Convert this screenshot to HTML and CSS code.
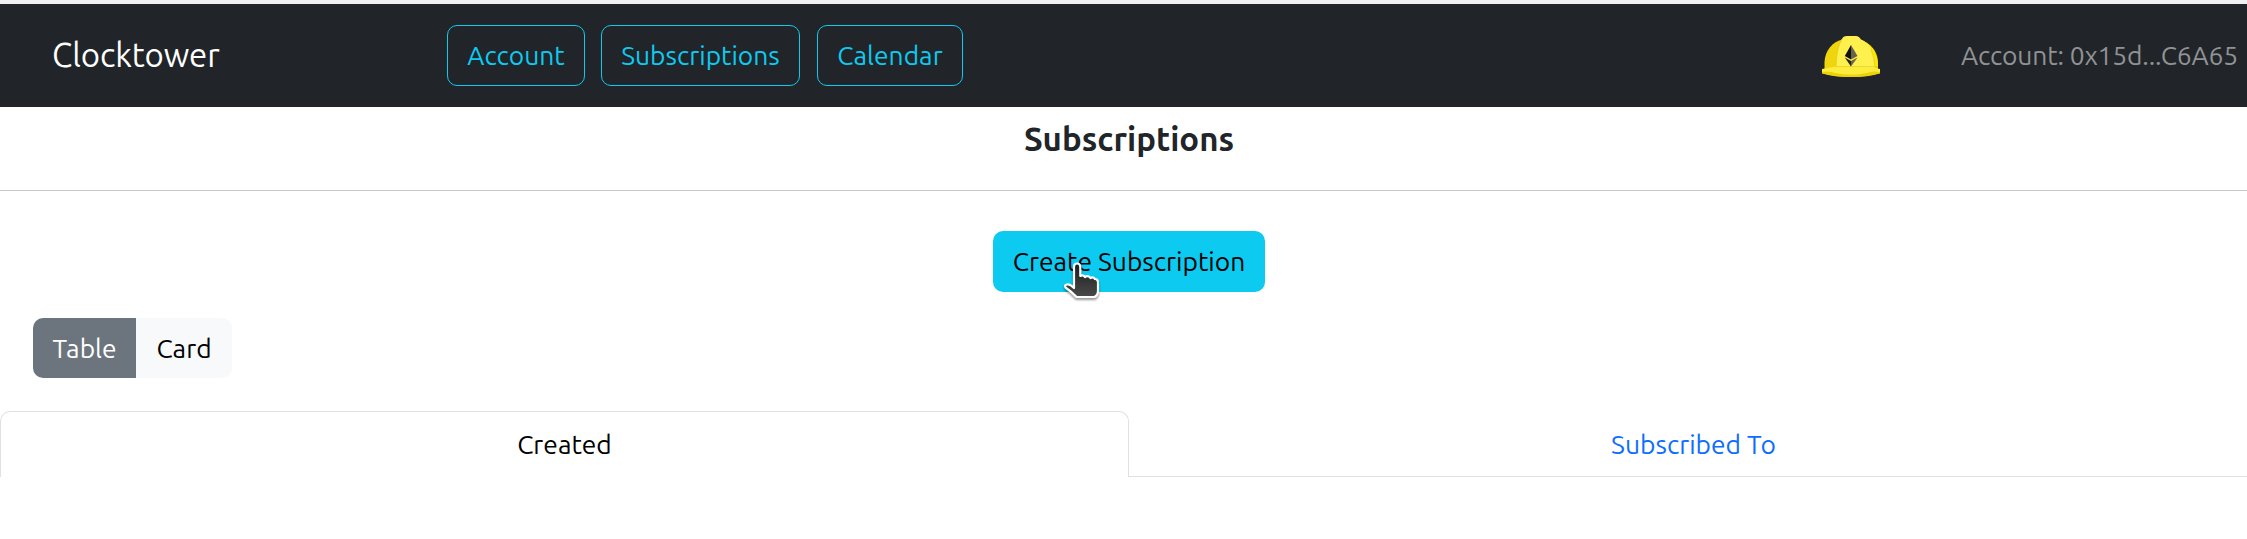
FILE: index.html
```html
<!DOCTYPE html>
<html lang="en">
<head>
<meta charset="utf-8">
<title>Clocktower</title>
<link rel="stylesheet" href="styles.css">
</head>
<body>
<nav class="navbar">
  <a class="brand">Clocktower</a>
  <div class="nav-links">
    <a class="btn btn-outline btn-account">Account</a>
    <a class="btn btn-outline btn-subs">Subscriptions</a>
    <a class="btn btn-outline btn-cal">Calendar</a>
  </div>
  <svg class="helmet" width="58" height="41" viewBox="0 0 58 41">
    <path d="M2.500 33V26C3 14 11 5.500 21 3.200L37 3.200C49 7 55.500 15 56 26V33Z" fill="#f0d50c"/>
    <path d="M37 3.500C49 7 55.500 16 56 30L52 31Z" fill="#ffe600"/>
    <path d="M14 32C14 20 16 10 20 3Q21 0 25 0H34Q37 0 39 3.500C47 7 52 14 53 32Z" fill="#fff04d"/>
    <path d="M20 3C16 10 14 20 14 32M49 13Q52 21 53 31" fill="none" stroke="#d8c72c" stroke-width=".7"/>
    <path d="M0 33Q14 29.500 29 30Q45 29.500 58 33V37Q46 41 29 41Q12 41 0 37Z" fill="#ffed3d"/>
    <path d="M0 36Q8 34.500 13 37Q29 40.500 45 37Q51 34.500 58 36V37.500Q46 41 29 41Q12 41 0 37.500Z" fill="#edd208"/>
    <path d="M14 30.600H53" stroke="#d9c72b" stroke-width=".6"/>
    <path d="M29 9L22.800 20L29 23.500Z" fill="#111"/>
    <path d="M29 9L35.500 20L29 23.500Z" fill="#66624b"/>
    <path d="M22.800 21.500L29 25V30.500Z" fill="#242116"/>
    <path d="M35.500 21.500L29 25V30.500Z" fill="#6b6648"/>
  </svg>
  <span class="wallet">Account: 0x15d...C6A65</span>
</nav>
<header class="page-head"><h1>Subscriptions</h1></header>
<main>
  <div class="create-row">
    <button class="btn btn-create">Create Subscription</button>
    <svg class="cursor" width="42" height="46" viewBox="0 0 42 46">
      <defs>
        <linearGradient id="hand" x1="0" y1="0" x2="0" y2="1">
          <stop offset="0" stop-color="#1c1c1c"/>
          <stop offset="1" stop-color="#4a4a4a"/>
        </linearGradient>
      </defs>
      <path d="M13 6Q13 2.500 16 2.500Q19.300 2.500 19.300 6V15Q22 13.500 24 16Q27 14 29.500 17Q32 15.500 34 18Q37 18 37 22V30Q37 34 33.500 36H15.500Q11 31 4.500 26.500Q3 24 6 23.500Q9 23 13 27Z" fill="url(#hand)" stroke="#fff" stroke-width="2.200" stroke-linejoin="round"/>
    </svg>
  </div>
  <div class="toggle">
    <button class="opt opt-table">Table</button>
    <button class="opt opt-card">Card</button>
  </div>
  <div class="tabs">
    <a class="tab tab-active">Created</a>
    <a class="tab">Subscribed To</a>
  </div>
</main>
</body>
</html>
```
FILE: styles.css
```css
* { box-sizing: border-box; }
body {
  margin: 0;
  border-top: 4px solid #eff1f2;
  background: #fff;
  color: #212529;
  font: 26.4px/39.6px Ubuntu, "Noto Sans", sans-serif;
  white-space: nowrap;
  overflow: hidden;
}
.navbar {
  display: flex;
  align-items: center;
  height: 103px;
  background: #212529;
}
.brand {
  width: 395px;
  margin-left: 52px;
  padding-bottom: 2px;
  color: #fff;
  font-size: 33px;
  line-height: 40px;
  letter-spacing: -.1px;
}
.nav-links { display: flex; gap: 16px; }
.btn {
  display: flex;
  align-items: center;
  justify-content: center;
  height: 61px;
  border-radius: 10px;
  font: inherit;
}
.btn-outline { border: 1px solid #0dcaf0; color: #0dcaf0; }
.btn-account { width: 138px; }
.btn-subs { width: 199px; }
.btn-cal { width: 146px; margin-left: 1px; }
.helmet { margin: 2px 0 0 859px; }
.wallet { margin-left: 81px; color: #909294; letter-spacing: -.15px; }
.page-head {
  width: 2258px;
  height: 84px;
  padding-top: 12px;
  border-bottom: 1px solid #c7c8c9;
  text-align: center;
}
h1 { margin: 0; font-size: 33px; line-height: 40px; }
main { width: 2258px; }
.create-row {
  position: relative;
  display: flex;
  justify-content: center;
  padding: 40px 0 26px;
}
.btn-create {
  width: 272px;
  padding: 0;
  border: 0;
  background: #0dcaf0;
  color: #000;
}
.cursor {
  position: absolute;
  left: 1061px;
  top: 70px;
  filter: drop-shadow(0 2px 1px rgba(0, 0, 0, .4));
}
.toggle { display: flex; margin-left: 33px; }
.opt { height: 60px; padding: 1px 0 0; border: 0; font: inherit; }
.opt-table { width: 103px; border-radius: 10px 0 0 10px; background: #6c757d; color: #fff; }
.opt-card { width: 96px; border-radius: 0 10px 10px 0; background: #f8f9fa; color: #000; }
.tabs {
  display: flex;
  height: 66px;
  margin-top: 33px;
  border-bottom: 1px solid #dee2e6;
}
.tab {
  flex: 1;
  height: 66px;
  padding-top: 14px;
  color: #0d6efd;
  text-align: center;
}
.tab-active {
  flex: 0 0 1129px;
  padding-top: 13px;
  border: 1px solid #dee2e6;
  border-bottom: 0;
  border-radius: 10px 10px 0 0;
  background: #fff;
  color: #000;
}
```
